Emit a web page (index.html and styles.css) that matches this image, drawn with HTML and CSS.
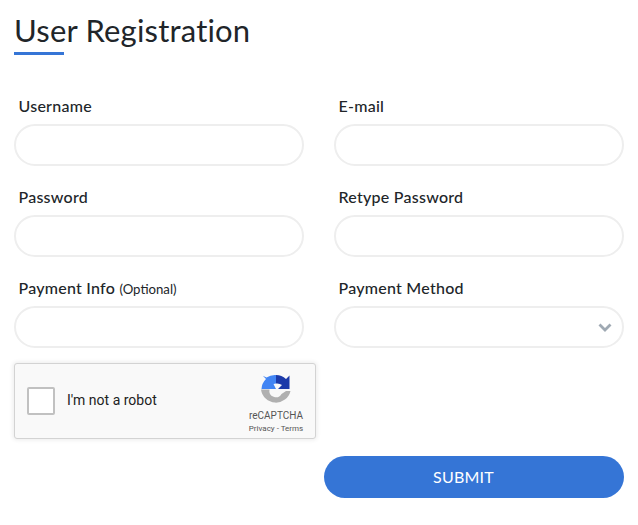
FILE: index.html
```html
<!DOCTYPE html>
<html lang="en">
<head>
<meta charset="utf-8">
<title>User Registration</title>
<link rel="stylesheet" href="styles.css">
</head>
<body>
<form class="page">
  <h1 class="title">User Registration</h1>
  <div class="grid">
    <div class="field"><label class="label">Username</label><div class="input"></div></div>
    <div class="field"><label class="label">E-mail</label><div class="input"></div></div>
    <div class="field"><label class="label">Password</label><div class="input"></div></div>
    <div class="field"><label class="label">Retype Password</label><div class="input"></div></div>
    <div class="field"><label class="label">Payment Info <small class="opt">(Optional)</small></label><div class="input"></div></div>
    <div class="field"><label class="label">Payment Method</label>
      <div class="input select">
        <svg class="chev" width="14" height="9" viewBox="0 0 14 9"><path d="M1.5 1.5 7 7l5.500-5.500" fill="none" stroke="#9fa9b3" stroke-width="2.800"/></svg>
      </div>
    </div>
  </div>
  <div class="captcha">
    <div class="check"></div>
    <span class="robot">I'm not a robot</span>
    <div class="brand">
      <svg class="logo" width="30" height="32" viewBox="0 0 30 32">
        <path d="M15 1A15 15 0 0 1 25 5L28.500 1.500V15H17L21 11A8 8 0 0 0 15 9.500Z" fill="#1c3aa9"/>
        <path d="M15 1V9.500L12.500 10 15 15H.5A15 15 0 0 1 5 5L1.800 1.800 5.500 3.500A15 15 0 0 1 15 1Z" fill="#4285f4"/>
        <path d="M0 15.500H8.500A6.500 6.500 0 0 0 20.500 20L25 17H29.500A15 15 0 0 1 0 15.500Z" fill="#b0b0b0"/>
      </svg>
      <span class="re">reCAPTCHA</span>
      <span class="terms">Privacy - Terms</span>
    </div>
  </div>
  <div class="actions"><button class="submit" type="button">SUBMIT</button></div>
</form>
</body>
</html>
```
FILE: styles.css
```css
* { box-sizing: border-box; }
html, body { margin: 0; background: #fff; }
body { font-family: "Lato", "Noto Sans", sans-serif; color: #212529; }
.page { width: 638px; padding: 11px 14px 27px; }
.title {
  margin: 0;
  height: 44px;
  font-size: 31px;
  line-height: 38px;
  font-weight: 400;
  letter-spacing: 0.2px;
  color: #212529;
  position: relative;
}
.title::after {
  content: "";
  position: absolute;
  left: 0;
  bottom: 0;
  width: 50px;
  height: 3px;
  background: #3575d6;
}
.grid {
  display: grid;
  grid-template-columns: 290px 290px;
  column-gap: 30px;
  row-gap: 21px;
  margin-top: 41px;
}
.field { display: flex; flex-direction: column; }
.label {
  height: 28px;
  padding-left: 4.500px;
  font-size: 16px;
  line-height: 20px;
  font-weight: 500;
  letter-spacing: 0.25px;
  color: #212529;
}
.opt { font-size: 13.200px; letter-spacing: 0; font-weight: 400; }
.input {
  height: 42px;
  border: 2px solid #eeeeee;
  border-radius: 21px;
  background: #fff;
}
.select { display: flex; align-items: center; justify-content: flex-end; padding-right: 10px; }
.chev { display: block; }
.captcha {
  width: 302px;
  height: 76px;
  margin-top: 15px;
  display: flex;
  align-items: center;
  background: #f9f9f9;
  border: 1px solid #d3d3d3;
  border-radius: 3px;
  box-shadow: 0 0 4px 1px rgba(0,0,0,.08);
  padding-left: 12px;
  font-family: "Roboto", sans-serif;
}
.check {
  width: 28px;
  height: 28px;
  background: #fff;
  border: 2px solid #c1c1c1;
  border-radius: 2px;
  flex: none;
}
.robot { margin-left: 12px; font-size: 14px; line-height: 16px; margin-bottom: 2px; color: #222; flex: 1; }
.brand {
  width: 70px;
  margin-right: 4px;
  display: flex;
  flex-direction: column;
  align-items: center;
  padding-top: 5px;
}
.logo { display: block; margin-bottom: 2px; }
.re { font-size: 10px; line-height: 13px; color: #555; margin-top: 1px; }
.terms { font-size: 8px; line-height: 11px; color: #555; margin-top: 1px; }
.actions { display: flex; justify-content: flex-end; margin-top: 17px; }
.submit {
  width: 300px;
  height: 42px;
  border: 0;
  border-radius: 21px;
  background: #3575d6;
  color: #fff;
  font-family: inherit;
  font-size: 16px;
  letter-spacing: 0.2px;
  padding: 0 21px 2px 0;
}
```
